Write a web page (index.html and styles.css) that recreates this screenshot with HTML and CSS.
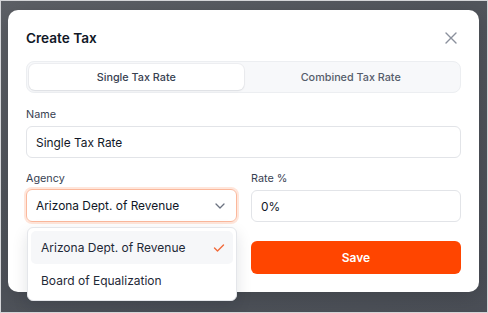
FILE: index.html
```html
<!DOCTYPE html>
<html>
<head>
  <link rel="stylesheet" href="styles.css">
</head>

<body>
  <div class="backdrop">
    <div class="modal">
      <div class="modal-header">
        <h3>Create Tax</h3>
        <!-- close icon -->
        <svg class="close" width="14" height="14" viewBox="0 0 14 14">
          <path d="M2 2 L12 12 M12 2 L2 12" stroke="#8a909c" stroke-width="1.4" stroke-linecap="round" fill="none"/>
        </svg>
      </div>

      <div class="tabs">
        <button class="tab active">Single Tax Rate</button>
        <button class="tab">Combined Tax Rate</button>
      </div>

      <form class="form">
        <div class="field wide">
          <label for="name">Name</label>
          <input type="text" id="name" value="Single Tax Rate">
        </div>

        <div class="field">
          <label>Agency</label>
          <div class="select-wrap">
            <div class="select">
              <span>Arizona Dept. of Revenue</span>
              <svg width="12" height="8" viewBox="0 0 12 8">
                <path d="M2 2 L6 6 L10 2" stroke="#6b7280" stroke-width="1.3" fill="none" stroke-linecap="round" stroke-linejoin="round"/>
              </svg>
            </div>
            <!-- open dropdown list -->
            <ul class="menu">
              <li class="selected">
                Arizona Dept. of Revenue
                <svg width="12" height="10" viewBox="0 0 12 10">
                  <path d="M1.5 5 L4.5 8 L10.5 2" stroke="#f26b3a" stroke-width="1.4" fill="none" stroke-linecap="round" stroke-linejoin="round"/>
                </svg>
              </li>
              <li>Board of Equalization</li>
            </ul>
          </div>
        </div>

        <div class="field">
          <label for="rate">Rate %</label>
          <input type="text" id="rate" value="0%">
        </div>

        <div></div>
        <button type="button" class="save">Save</button>
      </form>
    </div>
  </div>
</body>
</html>
```

FILE: styles.css
```css
* {
  box-sizing: border-box;
}

body {
  margin: 0;
  font-family: Inter, "Noto Sans", sans-serif;
  color: #111827;
}

.backdrop {
  width: 488px;
  height: 313px;
  border: 1px solid #d4d5d8;
  background: linear-gradient(160deg, #5d6066 0%, #50545b 40%, #4a4e56 100%);
  padding: 9px 0 0 7px;
  overflow: hidden;
}

.modal {
  width: 471px;
  height: 282px;
  background: #fff;
  border-radius: 10px;
  padding: 18px 18px;
  box-shadow: 0 4px 20px rgba(0, 0, 0, 0.15);
}

.modal-header {
  display: flex;
  justify-content: space-between;
  align-items: center;
  height: 20px;
  margin-bottom: 13px;
}

h3 {
  margin: 0;
  font-size: 13.6px;
  font-weight: 600;
  color: #111827;
}

.close {
  margin-right: 3px;
}

.tabs {
  display: grid;
  grid-template-columns: 1fr 1fr;
  height: 32px;
  padding: 2px;
  background: #f7f8fa;
  border: 1px solid #eceef1;
  border-radius: 8px;
}

.tab {
  border: none;
  background: transparent;
  font-family: inherit;
  font-size: 10.8px;
  font-weight: 500;
  color: #555c6a;
  border-radius: 6px;
  padding: 0;
}

.tab.active {
  background: #fff;
  color: #374151;
  box-shadow: 0 1px 2px rgba(16, 24, 40, 0.08), 0 0 0 1px rgba(16, 24, 40, 0.04);
}

.form {
  display: grid;
  grid-template-columns: 211px 210px;
  column-gap: 14px;
  margin-top: 14px;
}

.field {
  display: flex;
  flex-direction: column;
  margin-bottom: 13px;
}

.field.wide {
  grid-column: 1 / 3;
}

label {
  font-size: 10.8px;
  line-height: 15px;
  color: #374151;
  margin-bottom: 4px;
}

input {
  height: 32px;
  border: 1px solid #e2e4e8;
  border-radius: 6px;
  padding: 0 9px;
  font-family: inherit;
  font-size: 11.9px;
  color: #111827;
  outline: none;
}

.select-wrap {
  position: relative;
}

.select {
  height: 33px;
  margin-top: -1px;
  display: flex;
  justify-content: space-between;
  align-items: center;
  padding: 0 10px 0 9px;
  border: 1px solid #fbb89c;
  border-radius: 6px;
  box-shadow: 0 0 0 2px #ffe6db;
  font-size: 11.9px;
}

.menu {
  position: absolute;
  top: 37px;
  left: 1px;
  width: 210px;
  margin: 0;
  padding: 3px;
  list-style: none;
  background: #fff;
  border: 1px solid #e4e6ea;
  border-radius: 6px;
  box-shadow: 0 6px 16px rgba(16, 24, 40, 0.12);
  z-index: 2;
}

.menu li {
  height: 33px;
  display: flex;
  justify-content: space-between;
  align-items: center;
  padding: 0 8px 0 10px;
  font-size: 12px;
  color: #1f2937;
  border-radius: 5px;
}

.menu li.selected {
  background: #f6f7f9;
}

.save {
  height: 33px;
  margin-top: 6px;
  border: none;
  border-radius: 6px;
  background: #ff4500;
  color: #fff;
  font-family: inherit;
  font-size: 12px;
  font-weight: 600;
}
```
